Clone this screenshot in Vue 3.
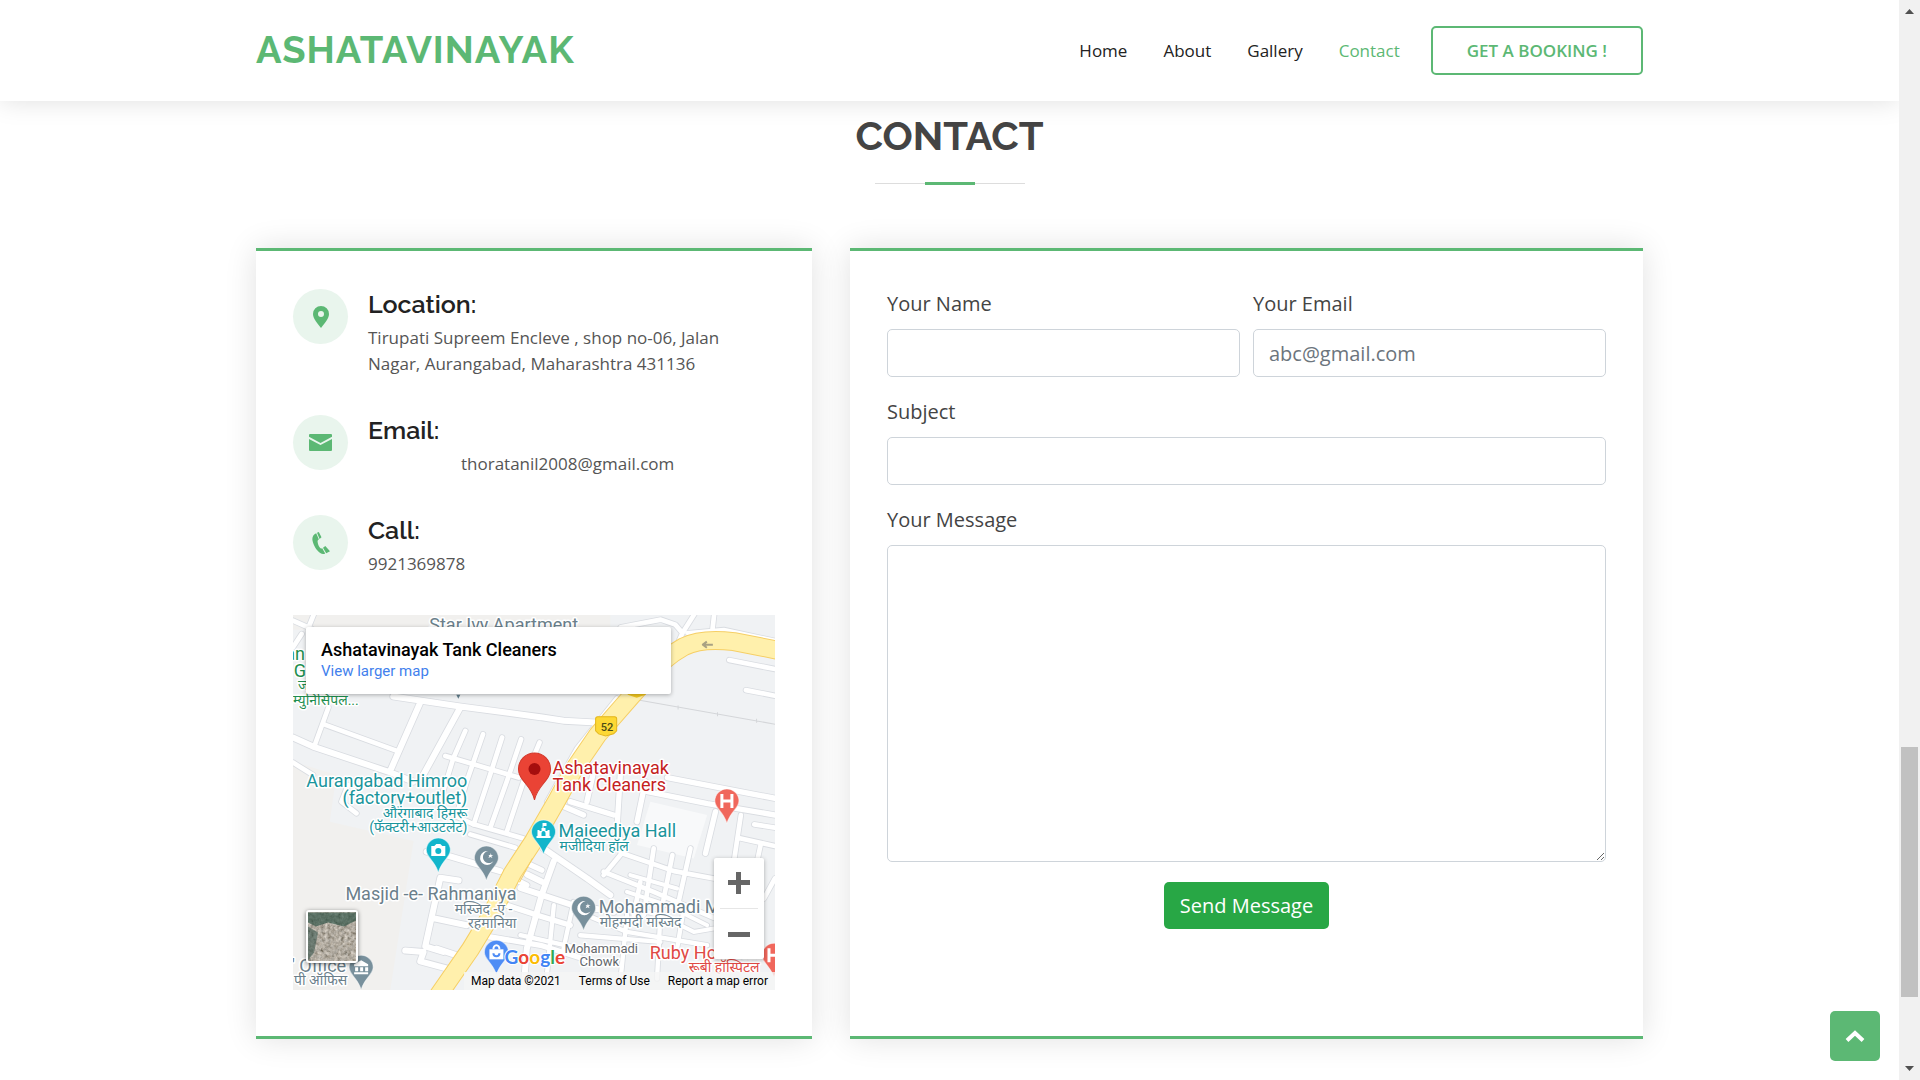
<script setup>
import { ref } from 'vue'

const links = ['Home', 'About', 'Gallery', 'Contact']
const active = 'Contact'

const form = ref({ name: '', email: '', subject: '', message: '' })

// Streets are drawn on a grid three times finer than the map itself.
const streets = [
  { w: 14, d: 'M0 18L56 43M26 58L0 98M62 0L46 40M106 278L66 388M91 328L311 408M0 443L60 480' },
  { w: 18, d: 'M0 368L60 395L290 472L360 500M381 263L291 468M501 278L391 478M300 245L501 275L741 307L811 318L906 323' },
  { w: 14, d: 'M516 348L480 430L440 560M569 358L520 500L490 600M626 368L590 480L541 628M683 373L640 500L590 640M738 383L690 500L640 650' },
  { w: 14, d: 'M456 423L676 488M480 600L541 628L690 670M531 658L666 698M165 510L145 560L190 595' },
  { w: 18, d: 'M400 710L440 715L620 768M496 796L441 788L396 993L450 1010M416 908L520 930M430 1000L520 1030M336 1006L391 1010L381 1038L470 1062' },
  { w: 16, d: 'M640 870L741 903L830 930M560 960L741 990L900 1040M690 740L745 765M640 780L700 810' },
  { w: 18, d: 'M750 700L881 790L950 840M781 738L745 838L700 1000L690 1125M701 778L745 800M681 818L831 868L960 890' },
  { w: 14, d: 'M930 770L1080 830L1260 908M990 708L930 780M981 713L1141 768L1260 790M1040 800L1020 900M1080 700L1050 900M1136 720L1100 900M1190 700L1150 880' },
  { w: 12, d: 'M1000 830L1120 870L1240 930M980 870L1100 900L1200 950L1260 940M1010 780L1150 820' },
  { w: 16, d: 'M1235 715L1265 590M1061 530L1241 566L1443 600M1121 488L1443 550M980 480L970 640L990 708M1055 500L1030 620M900 470L880 560M830 560L960 600M800 570L870 600' },
  { w: 14, d: 'M1341 600L1320 740L1400 760M1331 668L1443 693M1381 628L1443 638M1400 690L1385 760M1443 790L1410 850' },
  { w: 14, d: 'M981 38L1101 15L1145 30L1166 55L1201 0M1166 55L1155 80M1261 0L1255 53M1306 136L1443 163M1356 226L1443 243' },
  { w: 12, d: 'M970 250L850 400L760 560M1180 55L1290 45L1443 78' },
  { w: 13, d: 'M781 870L760 1080M840 860L810 1000M880 900L1000 950L1240 990M860 960L1100 980M1000 900L980 1100M1100 900L1090 1090M1170 880L1150 1000M681 960L860 1000' }
]

const mainRoad =
  'M486 36L440 27Q408 23 390 32Q370 43 355 62L338 81L304 120L280 155L263 186L240 226L219 258L197 301L177 334L145 380'

const labels = [
  { x: 136, y: 16, size: 18, tone: 'slate', text: 'Star Ivy Apartment' },
  { x: 12, y: 45, size: 18, tone: 'green', end: true, text: 'an' },
  { x: 13, y: 62, size: 18, tone: 'green', end: true, text: 'l G' },
  { x: 5, y: 75, size: 14, tone: 'green', text: 'ज' },
  { x: 0, y: 90, size: 14, tone: 'green', text: 'म्युनिसिपल...' },
  { x: 174, y: 172, size: 18, tone: 'teal', end: true, text: 'Aurangabad Himroo' },
  { x: 174, y: 189, size: 18, tone: 'teal', end: true, text: '(factory+outlet)' },
  { x: 174, y: 203, size: 14, tone: 'teal', end: true, text: 'औरंगाबाद हिमरू' },
  { x: 174, y: 217, size: 14, tone: 'teal', end: true, text: '(फॅक्टरी+आउटलेट)' },
  { x: 259, y: 159, size: 18, tone: 'crimson', text: 'Ashatavinayak' },
  { x: 259, y: 176, size: 18, tone: 'crimson', text: 'Tank Cleaners' },
  { x: 265, y: 222, size: 18, tone: 'teal', text: 'Majeediya Hall' },
  { x: 266, y: 236, size: 14, tone: 'teal', text: 'मजीदिया हॉल' },
  { x: 223, y: 285, size: 18, tone: 'slate', end: true, text: 'Masjid -e- Rahmaniya' },
  { x: 219, y: 299, size: 14, tone: 'slate', end: true, text: 'मस्जिद -ए -' },
  { x: 223, y: 313, size: 14, tone: 'slate', end: true, text: 'रहमानिया' },
  { x: 305, y: 298, size: 18, tone: 'slate', text: 'Mohammadi Masjid' },
  { x: 306, y: 312, size: 14, tone: 'slate', text: 'मोहम्मदी मस्जिद' },
  { x: 271, y: 338, size: 13, tone: 'grey', text: 'Mohammadi' },
  { x: 286, y: 351, size: 13, tone: 'grey', text: 'Chowk' },
  { x: 356, y: 344, size: 18, tone: 'red', text: 'Ruby Hospital' },
  { x: 395, y: 357, size: 14, tone: 'red', text: 'रूबी हॉस्पिटल' },
  { x: 53, y: 357, size: 18, tone: 'slate', end: true, text: "' Office" },
  { x: 1, y: 370, size: 14, tone: 'slate', text: 'पी ऑफिस' }
]

const pins = [
  { x: 145, y: 235, fill: '#12b5cb', kind: 'camera' },
  { x: 193, y: 243, fill: '#78909c', kind: 'moon' },
  { x: 290, y: 293, fill: '#78909c', kind: 'moon' },
  { x: 250, y: 217, fill: '#12b5cb', kind: 'hall' },
  { x: 433, y: 186, fill: '#f0675c', kind: 'hospital' },
  { x: 480, y: 340, fill: '#f0675c', kind: 'hospital' },
  { x: 68, y: 352, fill: '#78909c', kind: 'office' },
  { x: 203, y: 337, fill: '#4f8df5', kind: 'shop' }
]

const google = [
  ['G', '#4285f4'],
  ['o', '#ea4335'],
  ['o', '#fbbc04'],
  ['g', '#4285f4'],
  ['l', '#34a853'],
  ['e', '#ea4335']
]
</script>

<template>
  <div class="shell">
    <div class="page">
      <header class="header">
        <div class="container bar">
          <a class="logo" href="#">ASHATAVINAYAK</a>
          <nav class="nav">
            <a v-for="l in links" :key="l" :href="'#' + l.toLowerCase()" :class="{ active: l === active }">{{ l }}</a>
            <a class="booking" href="#booking">GET A BOOKING !</a>
          </nav>
        </div>
      </header>

      <main class="container contact">
        <h2 class="title">CONTACT</h2>
        <div class="rule"><span></span></div>

        <div class="cards">
          <section class="card info">
            <div class="item">
              <span class="badge">
                <svg width="16" height="22" viewBox="0 0 16 22"><path fill="#5cb874" fill-rule="evenodd" d="M8 0a8 8 0 0 1 8 8c0 4.5-4.500 9.500-8 14C4.500 17.500 0 12.500 0 8a8 8 0 0 1 8-8zm0 5a3 3 0 1 0 0 6 3 3 0 0 0 0-6z" /></svg>
              </span>
              <div class="detail">
                <h4>Location:</h4>
                <p>Tirupati Supreem Encleve , shop no-06, Jalan Nagar, Aurangabad, Maharashtra 431136</p>
              </div>
            </div>
            <div class="item">
              <span class="badge">
                <svg width="23" height="17" viewBox="0 0 23 17"><path fill="#5cb874" d="M1 0h21a1 1 0 0 1 1 1v1.800L11.500 9 0 2.800V1a1 1 0 0 1 1-1zM0 5l11.500 6L23 5v11a1 1 0 0 1-1 1H1a1 1 0 0 1-1-1z" /></svg>
              </span>
              <div class="detail">
                <h4>Email:</h4>
                <p class="mail">thoratanil2008@gmail.com</p>
              </div>
            </div>
            <div class="item">
              <span class="badge">
                <svg width="18" height="22" viewBox="0 0 18 22">
                  <path fill="#5cb874" d="M4.200 1.200C1 2.600-.2 5.500.6 9c1 4.600 4.200 9.800 7.600 12 1.700 1.200 3.500 1.200 5 .4l-3-5.200c-.8.500-1.700.3-2.400-.6-1.300-1.800-2-3.800-2.200-5.800-.1-1.100.3-1.900 1.300-2.200z" />
                  <path fill="#5cb874" d="M5 .8L6.800 0l2.700 5.200-1.900 1.900zM11 15.800l2.300-1.900L18 19.200l-3.800 2z" />
                </svg>
              </span>
              <div class="detail">
                <h4>Call:</h4>
                <p>9921369878</p>
              </div>
            </div>

            <div class="map">
              <svg class="canvas" viewBox="0 0 481 375" preserveAspectRatio="xMidYMid slice">
                <defs>
                  <filter id="terrain" x="0" y="0" width="1" height="1">
                    <feTurbulence type="fractalNoise" baseFrequency="0.3" numOctaves="4" seed="7" />
                    <feColorMatrix values="0.5 0.5 0 0 -0.06  0.5 0.45 0 0 -0.07  0.5 0.4 0 0 -0.1  0 0 0 0 1" />
                  </filter>
                </defs>
                <rect width="481" height="375" fill="#f0f2f4" />
                <g transform="scale(0.3333)">
                  <path fill="#f1f0ee" d="M0 0H950V45H0zM0 440L130 480L110 620L361 678L291 1125H0z" />
                  <path fill="#f8f9fa" d="M1070 560L1240 600L1200 730L1030 690z" />
                  <g fill="none" stroke="#d9dce1" stroke-linecap="round" stroke-linejoin="round">
                    <path v-for="(s, i) in streets" :key="i" :d="s.d" :stroke-width="s.w + 5" />
                  </g>
                  <g fill="none" stroke="#ffffff" stroke-linecap="round" stroke-linejoin="round">
                    <path v-for="(s, i) in streets" :key="i" :d="s.d" :stroke-width="s.w" />
                  </g>
                  <path fill="none" stroke="#d4d6d9" stroke-width="3" d="M1000 250L1443 328M1153 272v12M1271 292v12M1388 312v12" />
                </g>
                <g fill="none" stroke-linejoin="round">
                  <path :d="mainRoad" stroke="#f6cf65" stroke-width="19" />
                  <path :d="mainRoad" stroke="#fff0ac" stroke-width="17" />
                  <path d="M239 243L226 267" stroke="#f6cf65" />
                  <path d="M419 30H409M413 27L409 30L413 33" stroke="#a9a183" stroke-width="2" />
                </g>
                <path fill="#f3c81e" d="M334 76h18v4l-9 3-9-3z" />
                <path fill="#fdd835" stroke="#e3b51c" d="M304 102h17q2 0 2 2v12l-3 3-8 2-7-2-3-3v-12q0-2 2-2z" />
                <text x="307" y="116" class="shield">52</text>
                <path fill="#607d8b" d="M163 80h4l-2 4z" />

                <text
                  v-for="(t, i) in labels"
                  :key="i"
                  :x="t.x"
                  :y="t.y"
                  :font-size="t.size"
                  :text-anchor="t.end ? 'end' : 'start'"
                  :class="['label', t.tone]"
                >{{ t.text }}</text>

                <g v-for="(p, i) in pins" :key="'p' + i" :transform="`translate(${p.x} ${p.y})`">
                  <path :fill="p.fill" stroke="#ffffff" stroke-opacity="0.5" d="M0-12A12 12 0 0 1 12 0C12 7 4 10 0 22C-4 10-12 7-12 0A12 12 0 0 1 0-12z" />
                  <g v-if="p.kind === 'camera'">
                    <path fill="#fff" d="M-7-4h3l2-2h4l2 2h3v10H-7z" />
                    <circle r="3" cy="1" :fill="p.fill" />
                  </g>
                  <path v-else-if="p.kind === 'moon'" fill="#fff" d="M2-7A7 7 0 1 0 7 3A6 6 0 1 1 2-7zM4-5l1 2h2l-2 1 1 2-2-1-2 1 1-2-1-1h2z" />
                  <path v-else-if="p.kind === 'hall'" fill="#fff" fill-rule="evenodd" d="M-7 6v-2h1v-6h2v1h2v-3h1v-5h4v3h-3v2h2v3h2v-1h2v6h1v2zM-2 4h4v-3a2 2 0 0 0-4 0z" />
                  <path v-else-if="p.kind === 'hospital'" fill="none" stroke="#fff" stroke-width="3" d="M-5-7V7M5-7V7M-5 0H5" />
                  <path v-else-if="p.kind === 'office'" fill="#fff" d="M0-7l7 4v2H-7v-2zM-6 0h3v4h-3zM-1 0h3v4h-3zM4 0h3v4H4zM-7 5H7v2H-7z" />
                  <g v-else>
                    <path fill="#fff" d="M-7-3H7V7H-7z" />
                    <path fill="none" stroke="#fff" stroke-width="2" d="M-3-3a3 4 0 0 1 6 0" />
                    <path fill="none" :stroke="p.fill" stroke-width="2" d="M-3 1a3 3 0 0 0 6 0" />
                  </g>
                </g>

                <path fill="#ea4335" stroke="#d3392c" d="M241 138A16 16 0 0 1 257 154C257 166 244 170 241 185C238 170 225 166 225 154A16 16 0 0 1 241 138z" />
                <circle cx="241" cy="154" r="6" fill="#a50e0e" />

                <text x="211" y="349" class="google"><tspan v-for="(g, i) in google" :key="i" :fill="g[1]">{{ g[0] }}</tspan></text>
              </svg>

              <div class="place">
                <strong>Ashatavinayak Tank Cleaners</strong>
                <a href="#map">View larger map</a>
              </div>

              <button class="satellite" type="button" aria-label="Show satellite imagery">
                <svg viewBox="0 0 48 48">
                  <rect width="48" height="48" filter="url(#terrain)" />
                  <path fill="#1f4a3c" fill-opacity="0.6" d="M0 0H48V8L36 14L20 10L8 14L0 10z" />
                  <path fill="#24483f" fill-opacity="0.5" d="M0 14L10 20L6 40L0 48z" />
                </svg>
              </button>

              <div class="zoom">
                <button type="button" aria-label="Zoom in">
                  <svg width="22" height="22" viewBox="0 0 22 22"><path fill="#666" d="M8 0h5v8h9v5h-9v9H8v-9H0V8h8z" /></svg>
                </button>
                <button type="button" aria-label="Zoom out">
                  <svg width="22" height="22" viewBox="0 0 22 22"><path fill="#666" d="M0 9h22v5H0z" /></svg>
                </button>
              </div>

              <div class="legal">
                <span>Map data ©2021</span>
                <a href="#terms">Terms of Use</a>
                <a href="#report">Report a map error</a>
              </div>
            </div>
          </section>

          <form class="card form" @submit.prevent>
            <div class="pair">
              <div class="field">
                <label for="name">Your Name</label>
                <input id="name" v-model="form.name" type="text" />
              </div>
              <div class="field">
                <label for="email">Your Email</label>
                <input id="email" v-model="form.email" type="email" placeholder="abc@gmail.com" />
              </div>
            </div>
            <div class="field">
              <label for="subject">Subject</label>
              <input id="subject" v-model="form.subject" type="text" />
            </div>
            <div class="field">
              <label for="message">Your Message</label>
              <textarea id="message" v-model="form.message"></textarea>
            </div>
            <button class="send" type="submit">Send Message</button>
          </form>
        </div>
      </main>

      <a class="top" href="#" aria-label="Back to top">
        <svg width="20" height="12" viewBox="0 0 20 12"><path fill="none" stroke="#fff" stroke-width="4" d="M2 10.500L10 3l8 7.500" /></svg>
      </a>
    </div>

    <div class="scrollbar" aria-hidden="true">
      <svg width="9" height="5" viewBox="0 0 9 5"><path fill="#505050" d="M0 5L4.500 0L9 5z" /></svg>
      <div class="track"><div class="thumb"></div></div>
      <svg width="9" height="5" viewBox="0 0 9 5"><path fill="#505050" d="M0 0h9L4.500 5z" /></svg>
    </div>
  </div>
</template>

<style>
body {
  margin: 0;
  background: #fff;
}
</style>

<style scoped>
* {
  box-sizing: border-box;
}

.shell {
  display: flex;
  min-height: 100vh;
  font-family: "Open Sans", sans-serif;
  color: #444;
}

.page {
  flex: 1;
  min-width: 0;
}

.container {
  max-width: 1387px;
  margin: 0 auto;
}

a {
  text-decoration: none;
}

.header {
  position: sticky;
  top: 0;
  z-index: 5;
  background: #fff;
  box-shadow: 0 0 25px rgba(0, 0, 0, 0.13);
  clip-path: inset(0 0 -40px 0);
}

.bar {
  display: flex;
  align-items: center;
  justify-content: space-between;
  height: 101px;
}

.logo {
  padding-bottom: 2px;
  font-family: Raleway, Lato, sans-serif;
  font-size: 38px;
  font-weight: 700;
  line-height: 44px;
  letter-spacing: 1px;
  color: #5cb874;
}

.nav {
  display: flex;
  align-items: center;
  gap: 36px;
  font-size: 17px;
}

.nav a {
  color: #222;
}

.nav a.active {
  color: #5cb874;
}

.nav .booking {
  display: grid;
  place-items: center;
  height: 49px;
  margin-left: -5px;
  padding: 0 34px;
  border: 2px solid #5cb874;
  border-radius: 5px;
  font-weight: 600;
  color: #5cb874;
}

.contact {
  padding-top: 11px;
}

.title {
  margin: 0;
  font-family: Raleway, Lato, sans-serif;
  font-size: 40px;
  font-weight: 700;
  line-height: 48px;
  text-align: center;
}

.rule {
  display: flex;
  align-items: center;
  width: 150px;
  height: 3px;
  margin: 22px auto 63px;
}

.rule::before,
.rule::after {
  content: "";
  flex: 1;
  height: 1px;
  background: #ddd;
}

.rule span {
  width: 50px;
  height: 3px;
  background: #5cb874;
}

.cards {
  display: grid;
  grid-template-columns: 556fr 793fr;
  gap: 38px;
}

.card {
  padding: 38px 37px;
  border-top: 3px solid #5cb874;
  border-bottom: 3px solid #5cb874;
  background: #fff;
  box-shadow: 0 0 30px rgba(0, 0, 0, 0.12);
}

.item {
  display: flex;
  gap: 20px;
  margin-bottom: 38px;
}

.badge {
  display: grid;
  flex: none;
  place-items: center;
  width: 55px;
  height: 55px;
  border-radius: 50%;
  background: #e9f5ed;
}

.detail h4 {
  margin: 0 0 6px;
  font-family: Raleway, Lato, sans-serif;
  font-size: 25px;
  font-weight: 600;
  line-height: 30px;
  color: #222;
}

.detail p {
  margin: 0;
  font-size: 17px;
  line-height: 26px;
  color: #555;
}

.detail .mail {
  padding-left: 93px;
}

.map {
  position: relative;
  height: 375px;
  margin-bottom: 8px;
  overflow: hidden;
  font-family: Roboto, sans-serif;
}

.canvas {
  display: block;
  width: 100%;
  height: 100%;
}

.label {
  font-family: Roboto, "Noto Sans", sans-serif;
  stroke: #fff;
  stroke-width: 3px;
  stroke-linejoin: round;
  paint-order: stroke;
}

.slate { fill: #6b7f8b; }
.green { fill: #1e8e4e; }
.teal { fill: #1a959c; }
.crimson { fill: #c5221f; }
.red { fill: #df4a45; }
.grey { fill: #63676c; }

.shield {
  font-family: Roboto, sans-serif;
  font-size: 11px;
  font-weight: 500;
  fill: #4b4b16;
}

.google {
  font-family: Lato, sans-serif;
  font-size: 19px;
  font-weight: 700;
  stroke: #fff;
  stroke-width: 2px;
  paint-order: stroke;
}

.place {
  position: absolute;
  top: 12px;
  left: 13px;
  display: flex;
  flex-direction: column;
  width: 365px;
  height: 67px;
  padding: 12px 15px;
  border-radius: 2px;
  background: #fff;
  box-shadow: 0 1px 4px rgba(0, 0, 0, 0.3);
}

.place strong {
  font-size: 18px;
  font-weight: 500;
  line-height: 22px;
  color: #000;
}

.place a {
  font-size: 15px;
  line-height: 21px;
  color: #427fed;
}

.satellite {
  position: absolute;
  bottom: 27px;
  left: 13px;
  width: 52px;
  height: 53px;
  padding: 0;
  border: 2px solid #fff;
  border-radius: 3px;
  background: #fff;
  box-shadow: 0 1px 4px rgba(0, 0, 0, 0.5);
}

.satellite svg {
  display: block;
  width: 100%;
  height: 100%;
}

.zoom {
  position: absolute;
  right: 11px;
  bottom: 31px;
  width: 50px;
  padding: 0 6px;
  border-radius: 2px;
  background: #fff;
  box-shadow: 0 1px 4px rgba(0, 0, 0, 0.3);
}

.zoom button {
  display: grid;
  place-items: center;
  width: 100%;
  height: 50px;
  padding: 0;
  border: 0;
  background: none;
}

.zoom button + button {
  height: 51px;
  border-top: 1px solid #e6e6e6;
}

.legal {
  position: absolute;
  right: 0;
  bottom: 0;
  display: flex;
  gap: 18px;
  padding: 0 7px;
  background: rgba(245, 245, 245, 0.8);
  font-size: 12px;
  line-height: 18px;
  color: #000;
}

.legal a {
  color: #000;
}

.form {
  display: flex;
  flex-direction: column;
  gap: 20px;
}

.pair {
  display: grid;
  grid-template-columns: 1fr 1fr;
  gap: 13px;
}

.field {
  display: flex;
  flex-direction: column;
  gap: 10px;
}

.field label {
  font-size: 20px;
  line-height: 30px;
}

.field input,
.field textarea {
  width: 100%;
  height: 48px;
  padding: 8px 15px;
  border: 1px solid #ced4da;
  border-radius: 5px;
  background: #fff;
  font: inherit;
  font-size: 20px;
  color: #495057;
}

.field input::placeholder {
  color: #6c757d;
}

.field textarea {
  display: block;
  height: 317px;
}

.send {
  align-self: center;
  height: 47px;
  padding: 0 16px 1px;
  border: 0;
  border-radius: 5px;
  background: #28a745;
  font: inherit;
  font-size: 20px;
  color: #fff;
}

.top {
  position: fixed;
  right: 40px;
  bottom: 19px;
  display: grid;
  place-items: center;
  width: 50px;
  height: 50px;
  border-radius: 5px;
  background: #5cb874;
}

.scrollbar {
  position: sticky;
  top: 0;
  z-index: 6;
  display: flex;
  flex-direction: column;
  align-items: center;
  justify-content: space-between;
  width: 21px;
  height: 100vh;
  padding: 9px 0;
  background: #f1f1f1;
}

.track {
  display: flex;
  flex: 1;
  flex-direction: column;
  justify-content: flex-end;
  padding-bottom: 69px;
}

.thumb {
  width: 17px;
  height: 250px;
  background: #c1c1c1;
}
</style>
